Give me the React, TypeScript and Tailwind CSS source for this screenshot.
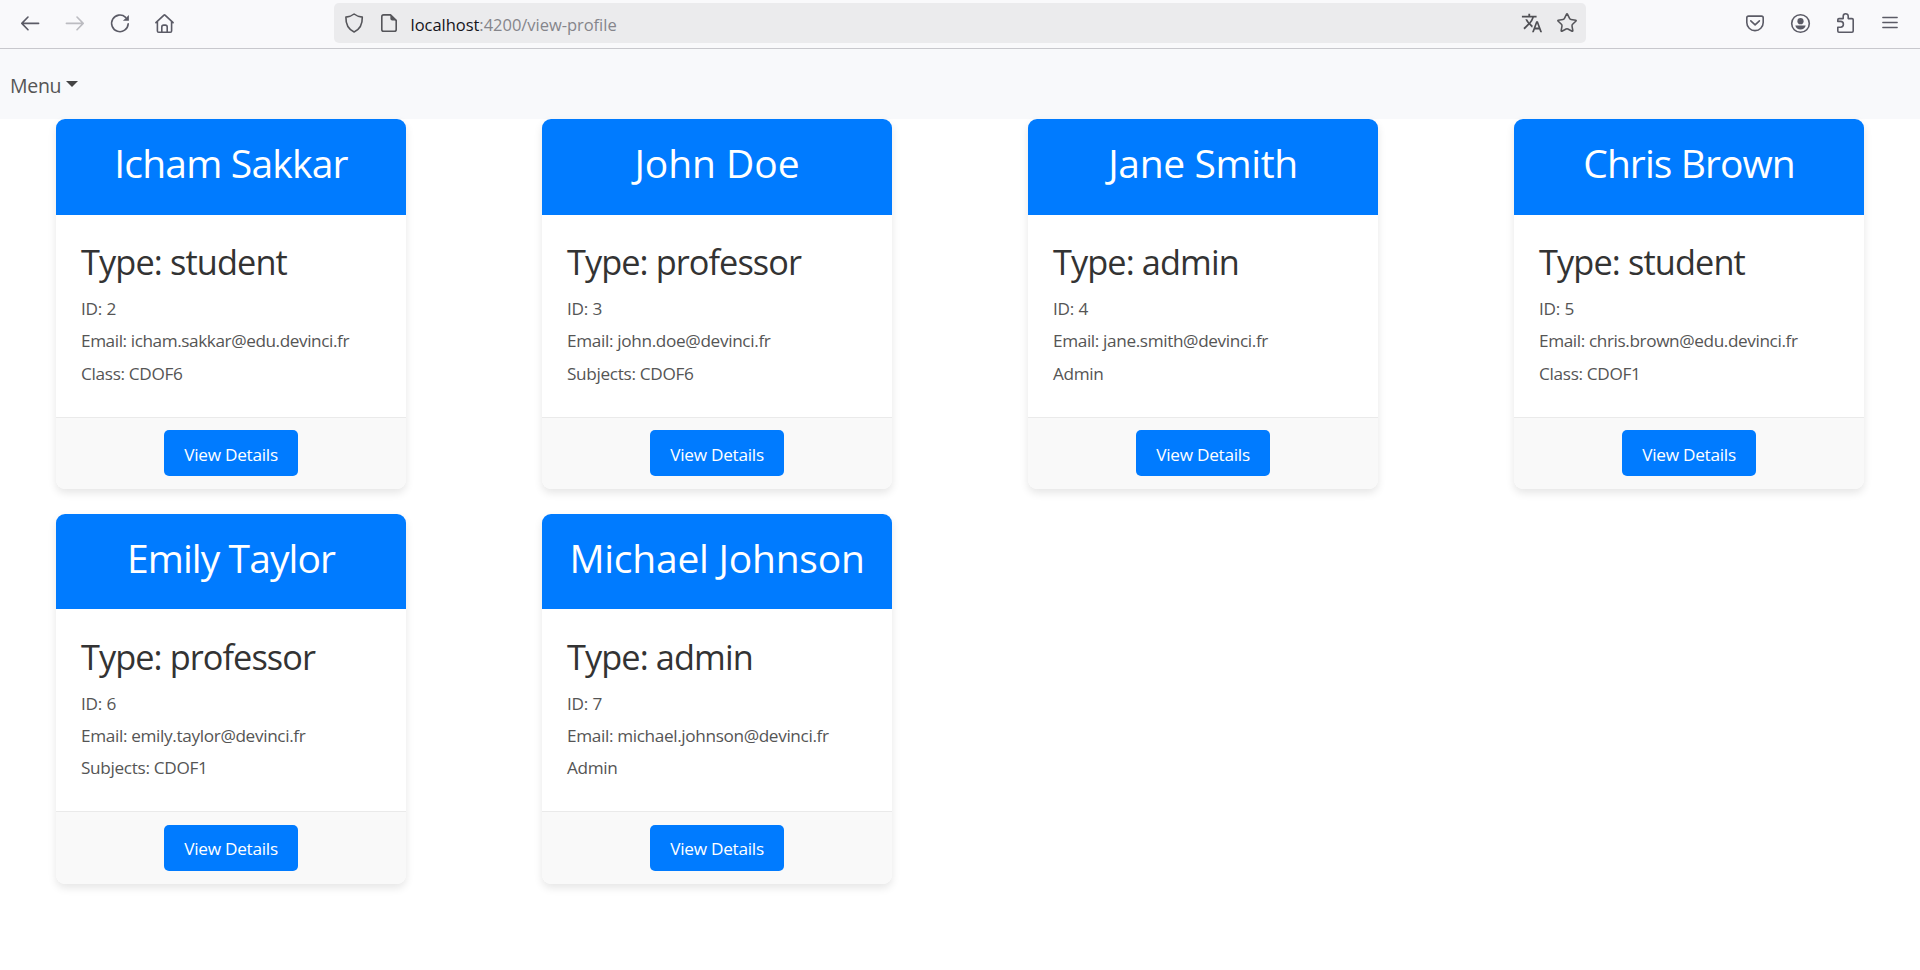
import type { ReactNode } from "react";
import { Star } from "lucide-react";
import { MdTranslate } from "react-icons/md";

type Line = { text: string; tracking: string };
type Profile = {
  name: Line;
  type: Line;
  id: number;
  email: Line;
  detail: string;
};

const student = { text: "Type: student", tracking: "tracking-[-0.88px]" };
const professor = { text: "Type: professor", tracking: "tracking-[-0.93px]" };
const admin = { text: "Type: admin", tracking: "tracking-[-0.9px]" };

const profiles: Profile[] = [
  {
    name: { text: "Icham Sakkar", tracking: "tracking-[-0.8px]" },
    type: student,
    id: 2,
    email: { text: "icham.sakkar@edu.devinci.fr", tracking: "tracking-[-0.42px]" },
    detail: "Class: CDOF6",
  },
  {
    name: { text: "John Doe", tracking: "tracking-[-0.05px]" },
    type: professor,
    id: 3,
    email: { text: "john.doe@devinci.fr", tracking: "tracking-[-0.34px]" },
    detail: "Subjects: CDOF6",
  },
  {
    name: { text: "Jane Smith", tracking: "tracking-[-0.38px]" },
    type: admin,
    id: 4,
    email: { text: "jane.smith@devinci.fr", tracking: "tracking-[-0.37px]" },
    detail: "Admin",
  },
  {
    name: { text: "Chris Brown", tracking: "tracking-[-0.93px]" },
    type: student,
    id: 5,
    email: { text: "chris.brown@edu.devinci.fr", tracking: "tracking-[-0.39px]" },
    detail: "Class: CDOF1",
  },
  {
    name: { text: "Emily Taylor", tracking: "tracking-[-0.93px]" },
    type: professor,
    id: 6,
    email: { text: "emily.taylor@devinci.fr", tracking: "tracking-[-0.35px]" },
    detail: "Subjects: CDOF1",
  },
  {
    name: { text: "Michael Johnson", tracking: "tracking-[-0.24px]" },
    type: admin,
    id: 7,
    email: { text: "michael.johnson@devinci.fr", tracking: "tracking-[-0.36px]" },
    detail: "Admin",
  },
];

function Icon({ children, viewBox = "0 0 24 24", className = "text-[#5b5b66]" }: { children: ReactNode; viewBox?: string; className?: string }) {
  return (
    <svg
      viewBox={viewBox}
      className={`size-6 shrink-0 ${className}`}
      fill="none"
      stroke="currentColor"
      strokeWidth="1.6"
      strokeLinecap="round"
      strokeLinejoin="round"
    >
      {children}
    </svg>
  );
}

function BrowserBar() {
  return (
    <header className="flex h-[49px] items-start border-b border-[#c8c8cd] bg-[#f9f9fb] pl-[18px]">
      <div className="flex gap-[21px] pt-[11px]">
        <Icon>
          <path d="M20.6 12.4H3.8M10 6 3.8 12.4l6.2 6.4" />
        </Icon>
        <Icon className="text-[#bcbcc1]">
          <path d="M3.4 12.4h16.8M14 6l6.2 6.4-6.2 6.4" />
        </Icon>
        <Icon>
          <path d="M17.6 6.3A8.3 8.3 0 1 0 20.2 12.9" />
          <path d="M20.9 3.9v5.8h-6z" fill="currentColor" stroke="none" />
        </Icon>
        <Icon viewBox="0.5 0 24 24">
          <path d="M3.4 11.7 11.2 4.3q.8-.7 1.6 0l7.8 7.4M4.9 10.6V20q0 1.3 1.3 1.3h11.6q1.3 0 1.3-1.3v-9.4M9.3 21v-5q0-1.9 1.9-1.9h1.6q1.9 0 1.9 1.9v5" />
        </Icon>
      </div>
      <div className="mt-[3px] ml-[157px] flex h-10 w-[1252px] items-center rounded-[5px] bg-[#ebebed] px-2">
        <Icon className="text-[#55555a]">
          <path d="M12.1 3C10 4.7 7 5.7 3.9 6.1 3.7 12.6 6 18.3 12.1 21c6.1-2.7 8.4-8.4 8.2-14.9C17.2 5.7 14.2 4.7 12.1 3z" />
        </Icon>
        <span className="ml-[11px] flex">
          <Icon className="text-[#55555a]">
            <path d="M13.5 3.9H6.6q-1.8 0-1.8 1.8v12.7q0 1.8 1.8 1.8h10.8q1.8 0 1.8-1.8V9.4z" />
            <path d="M13.4 3.6v4.2q0 1.8 1.8 1.8h4.3z" fill="currentColor" stroke="none" />
          </Icon>
        </span>
        <span className="ml-[9.5px] flex-1 pt-1 text-[16.5px] leading-6 tracking-[-0.03px] text-[#85858b]">
          <span className="text-[#15141a]">localhost</span>:4200/view-profile
        </span>
        <MdTranslate className="size-[22px] text-[#4f4f54]" />
        <Star className="ml-[13px] size-[22px] text-[#55555a]" strokeWidth={1.7} />
      </div>
      <div className="ml-[157px] flex gap-[21px] pt-[11px]">
        <Icon>
          <path d="M5.5 5.1h13q1.7 0 1.7 1.7v4.6a8.2 8.2 0 0 1-16.4 0V6.8q0-1.7 1.7-1.7z" />
          <path d="m7.8 9.9 4.3 4 4.3-4" />
        </Icon>
        <Icon viewBox="-0.5 0 24 24">
          <circle cx="12" cy="12.5" r="8.8" />
          <circle cx="12" cy="10.2" r="3.1" fill="currentColor" stroke="none" />
          <path d="M6.8 14.5h10.4c-.6 2.5-2.6 3.9-5.2 3.9s-4.6-1.4-5.2-3.9z" fill="currentColor" stroke="none" />
        </Icon>
        <Icon viewBox="-0.5 0 24 24">
          <path d="M4.3 10.4V8.8q0-1.2 1.2-1.2h4.2V5.2a2.5 2.5 0 0 1 5 0v2.4h3.8q1.2 0 1.2 1.2V20q0 1.2-1.2 1.2h-13q-1.2 0-1.2-1.2v-3.8H7a2.9 2.9 0 0 0 0-5.8z" />
        </Icon>
        <Icon>
          <path d="M4.8 6.5h14.4M4.8 11.5h14.4M4.8 16.5h14.4" strokeWidth="1.3" />
        </Icon>
      </div>
    </header>
  );
}

function ProfileCard({ profile }: { profile: Profile }) {
  return (
    <article className="flex h-[370px] flex-col overflow-hidden rounded-[9px] bg-white shadow-[0_4px_9px_rgba(0,0,0,0.1)]">
      <div className="h-[95.8px] shrink-0 bg-[#007bff] pt-5 text-center text-white">
        <h1 className={`text-[39px] leading-[48px] whitespace-nowrap ${profile.name.tracking}`}>{profile.name.text}</h1>
      </div>
      <div className="h-[202px] shrink-0 px-[25px] pt-[26.7px] text-[17.2px] leading-[32.4px] text-[#555]">
        <h2 className={`mb-[9.5px] text-[34.3px] leading-[42px] text-[#333] ${profile.type.tracking}`}>{profile.type.text}</h2>
        <p className="tracking-[-0.2px]">ID: {profile.id}</p>
        <p className={profile.email.tracking}>Email: {profile.email.text}</p>
        <p className="tracking-[-0.32px]">{profile.detail}</p>
      </div>
      <div className="flex flex-1 items-start justify-center border-t border-[#eaeaea] bg-[#f9f9f9] pt-[12.4px]">
        <button className="h-[46px] w-[134px] rounded-[5px] bg-[#007bff] pt-[3px] text-[17.2px] tracking-[-0.25px] text-white">
          View Details
        </button>
      </div>
    </article>
  );
}

export default function App() {
  return (
    <div className="min-h-screen bg-white font-['Open_Sans','Noto_Sans',sans-serif]">
      <BrowserBar />
      <nav className="flex h-[69.8px] items-center bg-[#f8f9fb] pl-2.5">
        <button className="flex items-center pt-[3px] text-[19.5px] tracking-[-0.3px] text-[#555]">
          Menu
          <svg viewBox="0 0 12 6" className="mb-0.5 ml-[5px] h-1.5 w-3">
            <path d="M0 0h12L6 6z" fill="#444" />
          </svg>
        </button>
      </nav>
      <main className="grid grid-cols-[repeat(4,350px)] gap-x-[136px] gap-y-[24.8px] pl-14">
        {profiles.map((profile) => (
          <ProfileCard key={profile.id} profile={profile} />
        ))}
      </main>
    </div>
  );
}
